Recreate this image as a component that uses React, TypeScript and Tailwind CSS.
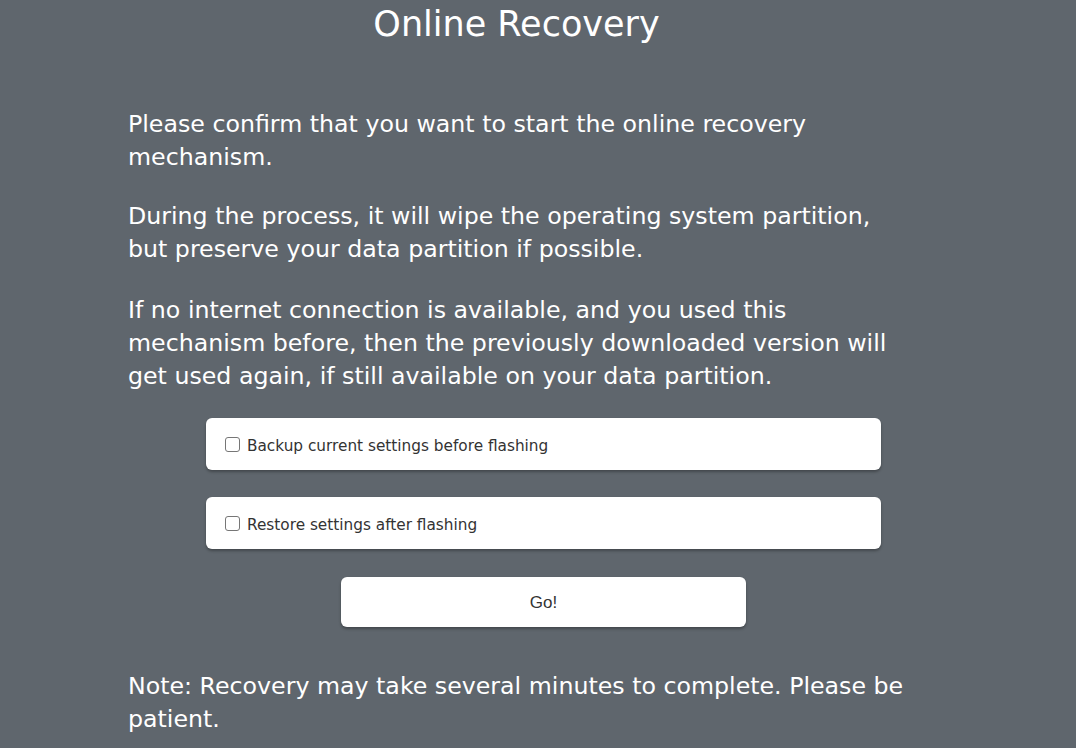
import React from "react";

function CheckRow({ label }: { label: string }) {
  return (
    <label className="flex h-[52px] w-[675px] items-center rounded-[6px] bg-white pl-[19px] shadow-[0_2px_3px_rgba(0,0,0,0.3)]">
      <input
        type="checkbox"
        className="m-0 mt-[1px] h-[15px] w-[15px] appearance-none rounded-[3px] border border-[#767676] bg-white"
      />
      <span
        className="ml-[7px] mt-[5px] text-[15.3px] text-[#333]"
        style={{ fontFamily: '"DejaVu Sans", sans-serif' }}
      >
        {label}
      </span>
    </label>
  );
}

export default function App() {
  return (
    <div
      className="h-[748px] w-full overflow-hidden bg-[#5f666d] text-white"
      style={{ fontFamily: '"DejaVu Sans", sans-serif' }}
    >
      <div className="flex justify-center pr-[43px] pt-[4px]">
        <h1 className="text-[35px] leading-[40px] font-normal whitespace-nowrap">Online Recovery</h1>
      </div>

      <div className="pl-[128px] pt-[64px] text-[23.7px] leading-[33px] whitespace-nowrap">
        <p>
          Please confirm that you want to start the online recovery
          <br />
          mechanism.
        </p>
        <p className="mt-[26px]">
          During the process, it will wipe the operating system partition,
          <br />
          but preserve your data partition if possible.
        </p>
        <p className="mt-[28px]">
          If no internet connection is available, and you used this
          <br />
          mechanism before, then the previously downloaded version will
          <br />
          get used again, if still available on your data partition.
        </p>
      </div>

      <div className="flex flex-col items-center pl-[11px] pt-[25px]">
        <CheckRow label="Backup current settings before flashing" />
        <div className="mt-[27px]">
          <CheckRow label="Restore settings after flashing" />
        </div>
        <button
          className="mt-[28px] flex h-[50px] w-[405px] items-center justify-center rounded-[6px] bg-white pt-[2px] text-[17px] text-[#333] shadow-[0_2px_3px_rgba(0,0,0,0.3)]"
          style={{ fontFamily: '"Liberation Sans", Arial, sans-serif' }}
        >
          Go!
        </button>
      </div>

      <div className="pl-[128px] pt-[43px] text-[23.7px] leading-[33px] whitespace-nowrap">
        <p>
          Note: Recovery may take several minutes to complete. Please be
          <br />
          patient.
        </p>
      </div>
    </div>
  );
}
